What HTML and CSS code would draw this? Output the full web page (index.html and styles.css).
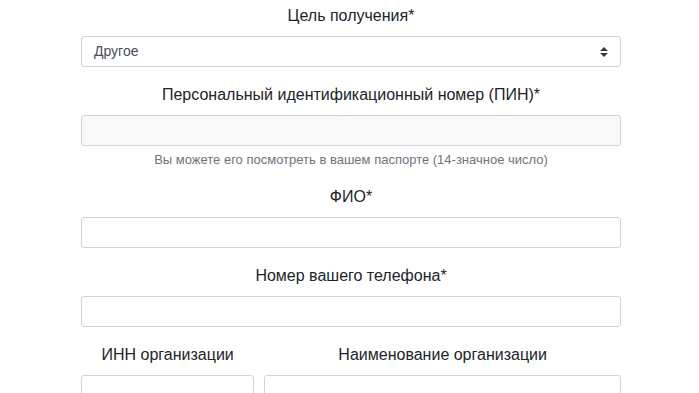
FILE: index.html
```html
<!DOCTYPE html>
<html lang="ru">
<head>
    <meta charset="UTF-8">
    <meta name="viewport" content="width=device-width, initial-scale=1.0">
    <title>Заявка</title>
    <link rel="stylesheet" href="styles.css">
</head>
<body>
    <form class="container">
        <div class="form-group">
            <label class="label">Цель получения*</label>
            <div class="select">
                <span>Другое</span>
                <svg class="arrows" width="8" height="10" viewBox="0 0 4 5"><path d="M2 0L0 2h4zm0 5L0 3h4z" fill="#343a40"/></svg>
            </div>
        </div>
        <div class="form-group">
            <label class="label">Персональный идентификационный номер (ПИН)*</label>
            <input class="input readonly" type="text" readonly>
            <small class="help">Вы можете его посмотреть в вашем паспорте (14-значное число)</small>
        </div>
        <div class="form-group">
            <label class="label">ФИО*</label>
            <input class="input" type="text">
        </div>
        <div class="form-group">
            <label class="label">Номер вашего телефона*</label>
            <input class="input" type="text">
        </div>
        <div class="form-row">
            <div class="form-group col-4">
                <label class="label">ИНН организации</label>
                <input class="input" type="text">
            </div>
            <div class="form-group col-8">
                <label class="label">Наименование организации</label>
                <input class="input" type="text">
            </div>
        </div>
    </form>
</body>
</html>
```

FILE: styles.css
```css
body {
    margin: 0;
    font-family: "Liberation Sans", Arial, sans-serif;
    color: #212529;
    background-color: #fff;
    font-size: 16px;
    line-height: 1.5;
}
.container {
    width: 540px;
    margin-left: 81px;
    padding-top: 4px;
}
.form-group {
    display: flex;
    flex-direction: column;
    margin-bottom: 16px;
}
.label {
    text-align: center;
    margin-bottom: 8px;
}
.select,
.input {
    box-sizing: border-box;
    height: 31px;
    border: 1px solid #ced4da;
    border-radius: 3px;
    font-family: inherit;
    font-size: 14px;
    background-color: #fff;
    width: 100%;
    margin: 0;
}
.select {
    display: flex;
    align-items: center;
    justify-content: space-between;
    padding: 0 12px 0 12px;
    color: #495057;
}
.readonly {
    background-color: #f9f9f9;
}
.help {
    margin-top: 4px;
    text-align: center;
    font-size: 13px;
    line-height: 19px;
    color: #6c757d;
}
.form-row {
    display: flex;
    margin: 0 -5px;
}
.form-row > .form-group {
    padding: 0 5px;
    box-sizing: border-box;
}
.col-4 {
    width: 33.3333%;
}
.col-8 {
    width: 66.6667%;
}
```
